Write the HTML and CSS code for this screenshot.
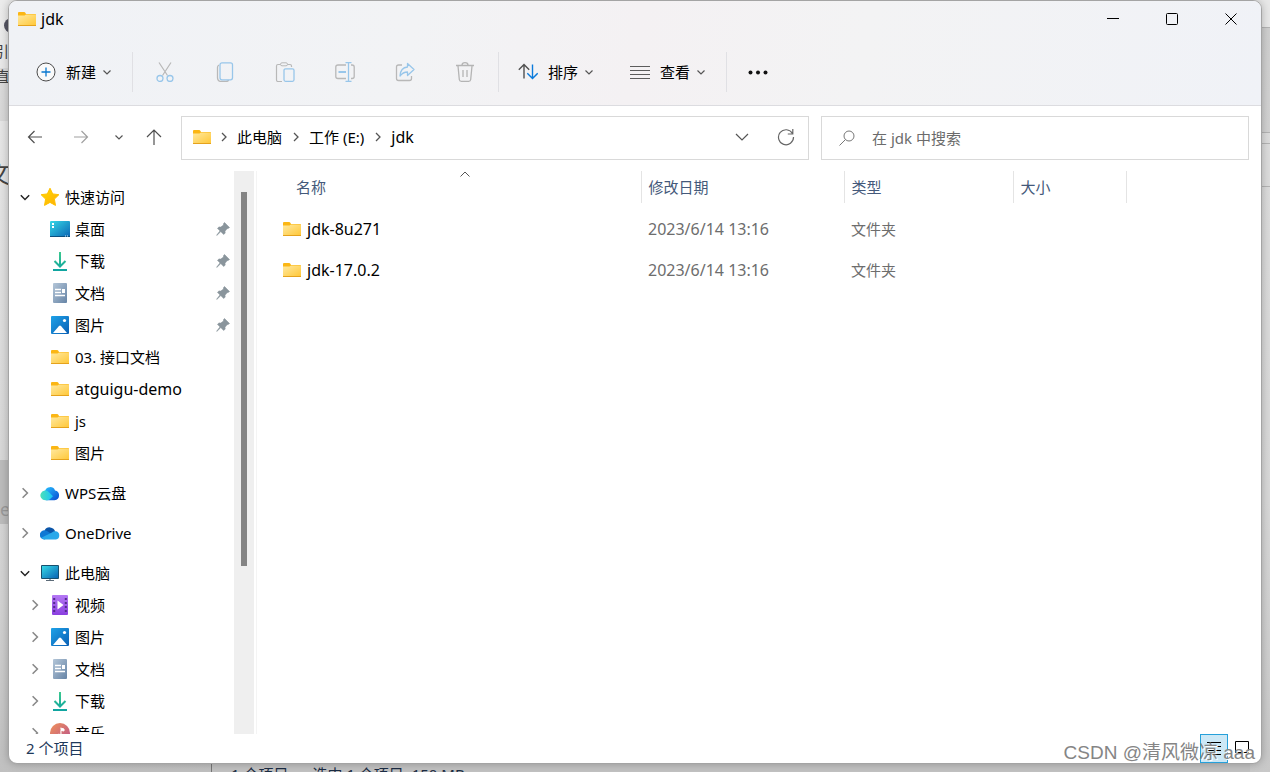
FILE: index.html
```html
<!DOCTYPE html>
<html lang="zh-CN">
<head>
<meta charset="utf-8">
<title>jdk</title>
<link rel="stylesheet" href="styles.css">
</head>
<body>
<svg class="sprite" aria-hidden="true">
  <defs>
    <linearGradient id="g-folder" x1="0" y1="0" x2="1" y2="1"><stop offset="0" stop-color="#ffe9a0"/><stop offset="1" stop-color="#ffc83a"/></linearGradient>
    <linearGradient id="g-desk" x1="0" y1="0" x2="1" y2="1"><stop offset="0" stop-color="#35d8e6"/><stop offset="1" stop-color="#0a64b4"/></linearGradient>
    <linearGradient id="g-down" x1="0" y1="0" x2="0" y2="1"><stop offset="0" stop-color="#3cc98e"/><stop offset="1" stop-color="#10a5a0"/></linearGradient>
    <linearGradient id="g-doc" x1="0" y1="0" x2="1" y2="1"><stop offset="0" stop-color="#b4c6d8"/><stop offset="1" stop-color="#6684a6"/></linearGradient>
    <linearGradient id="g-pic" x1="0" y1="0" x2="1" y2="1"><stop offset="0" stop-color="#1ea2e8"/><stop offset="1" stop-color="#0a5fb4"/></linearGradient>
    <linearGradient id="g-star" x1="0" y1="0" x2="1" y2="1"><stop offset="0" stop-color="#ffdc00"/><stop offset="1" stop-color="#ffac08"/></linearGradient>
    <linearGradient id="g-video" x1="0" y1="0" x2="0" y2="1"><stop offset="0" stop-color="#b478f4"/><stop offset="1" stop-color="#8a3fe0"/></linearGradient>
    <linearGradient id="g-music" x1="0" y1="0" x2="1" y2="1"><stop offset="0" stop-color="#f0925a"/><stop offset="1" stop-color="#b8508e"/></linearGradient>
    <linearGradient id="g-wps" x1="0" y1="0" x2="1" y2="1"><stop offset="0" stop-color="#28c0ff"/><stop offset="1" stop-color="#0848d0"/></linearGradient>
    <linearGradient id="g-wps2" x1="0" y1="0" x2="1" y2="0"><stop offset="0" stop-color="#4be0b8"/><stop offset="1" stop-color="#18c4fa"/></linearGradient>
  </defs>
  <symbol id="folder" viewBox="0 0 20 20"><path d="M1 4q0-1 1-1h5q1 0 1.500 1l.5 1H18q1 0 1 1v10H1z" fill="#fbb614"/><path d="M1 6.500h6.500L9 5.500h9q1 0 1 1V16H1z" fill="url(#g-folder)"/><path d="M1 16.500h18" stroke="#e5a21c"/></symbol>
  <symbol id="desktop" viewBox="0 0 20 20"><rect y="2" width="20" height="16" rx="1" fill="url(#g-desk)"/><path d="M0 17.500h20" stroke="#0b4f7e"/><path d="M2 4h2v2H2zM2 7h2v2H2z" fill="#fff"/><path d="M15 17h1m1 0h1" stroke="#cfe8fa"/></symbol>
  <symbol id="download" viewBox="0 0 20 20"><path d="M10 1v14M4.500 10l5.500 5.500L15.500 10M3 19h14" fill="none" stroke="url(#g-down)" stroke-width="2"/></symbol>
  <symbol id="doc" viewBox="0 0 20 20"><rect x="3" width="14" height="20" rx="1" fill="url(#g-doc)"/><path d="M5 6.500h6M5 9.500h6M5 12.500h10" stroke="#fff" stroke-width="1.400"/><path d="M12 6h3v4h-3z" fill="#fff"/></symbol>
  <symbol id="picture" viewBox="0 0 20 20"><rect x="1" y="1" width="18" height="18" rx="1" fill="url(#g-pic)"/><path d="M3 18l6-7q1-1 2 0l6 7z" fill="#fff"/><circle cx="14.500" cy="5.500" r="1.600" fill="#fff"/></symbol>
  <symbol id="star" viewBox="0 0 20 20"><path d="M10 1.200l2.700 5.700 6.200.8-4.500 4.400 1.100 6.300L10 15.400l-5.500 3 1.100-6.300L1.100 7.700l6.200-.8z" fill="url(#g-star)" stroke="#ffc000" stroke-linejoin="round"/></symbol>
  <symbol id="video" viewBox="0 0 20 20"><rect x="2" width="16" height="20" rx="1" fill="url(#g-video)"/><path d="M4.200 3v15M15.800 3v15" stroke="#532a8e" stroke-width="2" stroke-dasharray="2 2"/><path d="M7.500 5.500l6 4.500-6 4.500z" fill="#fff"/></symbol>
  <symbol id="music" viewBox="0 0 20 20"><circle cx="10" cy="10" r="10" fill="url(#g-music)"/><path d="M10.500 5l3.500 1v2l-3-.6v5.600" fill="#fff" stroke="#fff"/><circle cx="8.800" cy="13" r="2.200" fill="#fff"/></symbol>
  <symbol id="pc" viewBox="0 0 20 20"><rect x="1" y="2" width="18" height="14" rx="1" fill="#17506e"/><rect x="2" y="3" width="16" height="12" fill="url(#g-desk)"/><path d="M9 16h2v1.500H9z" fill="#9aa8b4"/><path d="M6 17.500h8" stroke="#5c6b78"/></symbol>
  <symbol id="wps" viewBox="0 0 20 20"><path d="M5 8a5.300 5.300 0 0 1 10-.6 5 5 0 0 1-.5 9.900H6z" fill="url(#g-wps)"/><path d="M5.400 17.300a4.900 4.900 0 1 1 3.600-8.100l4 4.100-3.500 3.300q-1 .7-2 .7z" fill="url(#g-wps2)"/></symbol>
  <symbol id="onedrive" viewBox="0 0 20 20"><path d="M4.500 7.500a5.800 5.800 0 0 1 10.700 1L10 13z" fill="#0a55a8"/><path d="M4.500 16.500A4.600 4.600 0 1 1 7 8.100l6 4z" fill="#0f78d4"/><path d="M12 9.600a4.300 4.300 0 0 1 4-1.300 4.200 4.200 0 0 1 0 8.200H4.500q-2 0-3.200-1.700z" fill="#28a8ea"/></symbol>
  <symbol id="pin" viewBox="0 0 14 14"><path d="M8.500.5l5 5-1.500 1-1 .2-2 2.600.2 1.700-1.500 1.500L4.800 9.600.8 13.400l-.2-.2L4 8.900 1.500 6.300 3 4.900l1.800.2L7.500 3l.1-1.500z" fill="#8a959c" stroke="#8a959c" stroke-width=".6"/></symbol>
  <symbol id="down" viewBox="0 0 10 10"><path d="M1.500 3.500L5 7l3.500-3.500" fill="none" stroke="currentColor" stroke-width="1.200"/></symbol>
  <symbol id="right" viewBox="0 0 10 10"><path d="M3 1l4 4-4 4" fill="none" stroke="currentColor" stroke-width="1.300"/></symbol>
</svg>

<div class="backdrop" aria-hidden="true">
  <div class="strip left">
    <i class="avatar"></i><span class="cut c1">引</span><span class="cut c2">直</span><span class="cut c3">文</span><span class="cut c4">e</span>
  </div>
  <div class="strip right"></div>
  <div class="strip under"><span>1 个项目</span><span>选中 1 个项目&nbsp; 150 MB</span></div>
</div>

<main class="window">
  <header class="top">
    <div class="titlebar">
      <svg class="i20"><use href="#folder"/></svg>
      <h1>jdk</h1>
      <div class="caption">
        <button aria-label="最小化"><svg width="12" height="12"><path d="M0 5.500h12" stroke="#000"/></svg></button>
        <button aria-label="最大化"><svg width="12" height="12"><rect x=".5" y=".5" width="11" height="11" rx="1" fill="none" stroke="#000"/></svg></button>
        <button aria-label="关闭"><svg width="12" height="12"><path d="M.5.5l11 11M11.500.5l-11 11" stroke="#000"/></svg></button>
      </div>
    </div>
    <div class="toolbar">
      <button class="tool new">
        <svg class="i20" viewBox="0 0 20 20" fill="none"><circle cx="10" cy="10" r="9" stroke="#4a4a4a" fill="#fafafa"/><path d="M10 5.500v9M5.500 10h9" stroke="#0a78d0" stroke-width="1.300"/></svg>
        <span>新建</span><svg class="i10"><use href="#down"/></svg>
      </button>
      <i class="sep"></i>
      <button class="icon" aria-label="剪切"><svg class="i20" viewBox="0 0 20 20" fill="none"><path d="M4 .5l8.500 13M16 .5l-8.500 13" stroke="#b8b8b8" stroke-width="1.200"/><circle cx="5" cy="16.500" r="3" stroke="#98c6ea" stroke-width="1.300"/><circle cx="15" cy="16.500" r="3" stroke="#98c6ea" stroke-width="1.300"/></svg></button>
      <button class="icon" aria-label="复制"><svg class="i20" viewBox="0 0 20 20" fill="none"><path d="M4 3q-1.500.6-1.500 2.500v10q0 4 4 4H11q2 0 2.600-1.500" stroke="#b8b8b8" stroke-width="1.300"/><rect x="5" y=".8" width="12.500" height="17" rx="2" stroke="#98c6ea" stroke-width="1.300"/></svg></button>
      <button class="icon" aria-label="粘贴"><svg class="i20" viewBox="0 0 20 20" fill="none"><path d="M5.500 2.500H3q-1.500 0-1.500 1.500v14q0 1.500 1.500 1.500h4M12.500 2.500H15q1.500 0 1.500 1.500v1" stroke="#b8b8b8" stroke-width="1.200"/><rect x="5.500" y=".8" width="7" height="3" rx="1.500" stroke="#b8b8b8"/><rect x="9" y="6.800" width="10" height="12.500" rx="1.500" stroke="#98c6ea" stroke-width="1.300"/></svg></button>
      <button class="icon" aria-label="重命名"><svg class="i20" viewBox="0 0 20 20" fill="none"><path d="M11 3H3Q.8 3 .8 5v9.500q0 2 2.200 2H11M16 3h1q2.200 0 2.200 2v9.500q0 2-2.200 2h-1" stroke="#b8b8b8" stroke-width="1.300"/><path d="M3.500 10H11" stroke="#98c6ea" stroke-width="2"/><path d="M13.500.7v18.600M10.500.7h6M10.500 19.300h6" stroke="#98c6ea" stroke-width="1.300"/></svg></button>
      <button class="icon" aria-label="共享"><svg class="i20" viewBox="0 0 20 20" fill="none"><path d="M7 3H3.500Q1.500 3 1.500 5v11.500q0 2 2 2h11q2 0 2-2V14" stroke="#b8b8b8" stroke-width="1.300"/><path d="M12.500 1.500l6.500 6-6.500 6V10Q8 10 5 14q.5-8.500 7.500-9z" stroke="#98c6ea" stroke-width="1.300" stroke-linejoin="round"/></svg></button>
      <button class="icon" aria-label="删除"><svg class="i20" viewBox="0 0 20 20" fill="none"><path d="M1 3.500h18M7 3q0-2.300 3-2.300T13 3M3 4l1.300 13.500q.2 1.800 2 1.800h7.400q1.800 0 2-1.800L17 4" stroke="#b4b4b4" stroke-width="1.300"/><path d="M8 8v7M12 8v7" stroke="#b4b4b4" stroke-width="1.300"/></svg></button>
      <i class="sep"></i>
      <button class="tool sort">
        <svg class="i20" viewBox="0 0 20 20" fill="none" stroke-width="1.400"><path d="M6 16.500V2.500M.8 7.700L6 2.500l5.200 5.200" stroke="#505050"/><path d="M14.500 2.500v14M9.300 11.300l5.200 5.200 5.200-5.200" stroke="#0a7adb"/></svg>
        <span>排序</span><svg class="i10"><use href="#down"/></svg>
      </button>
      <button class="tool view">
        <svg class="i20" viewBox="0 0 20 20" stroke="#5c5c5c"><path d="M0 4.500h20M0 8.500h20M0 12.500h20M0 16.500h20"/></svg>
        <span>查看</span><svg class="i10"><use href="#down"/></svg>
      </button>
      <i class="sep"></i>
      <button class="icon more" aria-label="查看更多"><svg class="i20" viewBox="0 0 20 20" fill="#111"><circle cx="2.500" cy="10.500" r="2"/><circle cx="10" cy="10.500" r="2"/><circle cx="17.500" cy="10.500" r="2"/></svg></button>
    </div>
  </header>

  <div class="navrow">
    <nav class="moves">
      <button aria-label="返回"><svg width="16" height="16" fill="none" stroke="#505050"><path d="M15 8H1.500M7.500 2l-6 6 6 6" stroke-width="1.200"/></svg></button>
      <button aria-label="前进"><svg width="16" height="16" fill="none" stroke="#a0a0a0"><path d="M1 8h13.500M8.500 2l6 6-6 6" stroke-width="1.200"/></svg></button>
      <button class="recent" aria-label="最近浏览的位置"><svg class="i10"><use href="#down"/></svg></button>
      <button class="up" aria-label="向上"><svg width="16" height="16" fill="none" stroke="#505050"><path d="M8 16V1M1 8l7-7 7 7" stroke-width="1.200"/></svg></button>
    </nav>
    <div class="address">
      <svg class="i20"><use href="#folder"/></svg>
      <svg class="i10"><use href="#right"/></svg><a href="#">此电脑</a>
      <svg class="i10"><use href="#right"/></svg><a href="#">工作 (E:)</a>
      <svg class="i10"><use href="#right"/></svg><a href="#" class="latin">jdk</a>
      <button class="history" aria-label="以前的位置"><svg width="14" height="14" fill="none" stroke="#555"><path d="M1 4l6 6 6-6" stroke-width="1.200"/></svg></button>
      <button class="refresh" aria-label="刷新"><svg width="18" height="18" fill="none" stroke="#666"><path d="M15.500 5.500A7.500 7.500 0 1 0 16.500 9M15.800 1v5h-5" stroke-width="1.200"/></svg></button>
    </div>
    <label class="search">
      <svg width="16" height="16" fill="none" stroke="#777"><circle cx="10" cy="6" r="5"/><path d="M6.500 9.500L.5 15.500"/></svg>
      <input type="text" aria-label="搜索" placeholder="在 jdk 中搜索">
    </label>
  </div>

  <div class="body">
    <nav class="tree">
      <ul>
        <li class="root"><svg class="i10 open"><use href="#down"/></svg><svg class="i20"><use href="#star"/></svg><span>快速访问</span></li>
        <li><svg class="i20"><use href="#desktop"/></svg><span>桌面</span><svg class="pin"><use href="#pin"/></svg></li>
        <li><svg class="i20"><use href="#download"/></svg><span>下载</span><svg class="pin"><use href="#pin"/></svg></li>
        <li><svg class="i20"><use href="#doc"/></svg><span>文档</span><svg class="pin"><use href="#pin"/></svg></li>
        <li><svg class="i20"><use href="#picture"/></svg><span>图片</span><svg class="pin"><use href="#pin"/></svg></li>
        <li><svg class="i20"><use href="#folder"/></svg><span>03. 接口文档</span></li>
        <li><svg class="i20"><use href="#folder"/></svg><span class="latin">atguigu-demo</span></li>
        <li><svg class="i20"><use href="#folder"/></svg><span>js</span></li>
        <li><svg class="i20"><use href="#folder"/></svg><span>图片</span></li>
      </ul>
      <ul><li class="root"><svg class="i10 shut"><use href="#right"/></svg><svg class="i20"><use href="#wps"/></svg><span>WPS云盘</span></li></ul>
      <ul><li class="root"><svg class="i10 shut"><use href="#right"/></svg><svg class="i20"><use href="#onedrive"/></svg><span>OneDrive</span></li></ul>
      <ul>
        <li class="root"><svg class="i10 open"><use href="#down"/></svg><svg class="i20"><use href="#pc"/></svg><span>此电脑</span></li>
        <li class="sub"><svg class="i10 shut"><use href="#right"/></svg><svg class="i20"><use href="#video"/></svg><span>视频</span></li>
        <li class="sub"><svg class="i10 shut"><use href="#right"/></svg><svg class="i20"><use href="#picture"/></svg><span>图片</span></li>
        <li class="sub"><svg class="i10 shut"><use href="#right"/></svg><svg class="i20"><use href="#doc"/></svg><span>文档</span></li>
        <li class="sub"><svg class="i10 shut"><use href="#right"/></svg><svg class="i20"><use href="#download"/></svg><span>下载</span></li>
        <li class="sub"><svg class="i10 shut"><use href="#right"/></svg><svg class="i20"><use href="#music"/></svg><span>音乐</span></li>
      </ul>
    </nav>
    <div class="scroll"><div class="thumb"></div></div>
    <section class="files">
      <table>
        <colgroup><col class="w-name"><col class="w-date"><col class="w-type"><col class="w-size"><col></colgroup>
        <thead><tr>
          <th class="name"><svg class="asc" width="10" height="6" fill="none" stroke="#555"><path d="M.5 5.500L5 1l4.500 4.500"/></svg>名称</th>
          <th>修改日期</th><th>类型</th><th>大小</th><td></td>
        </tr></thead>
        <tbody>
          <tr><td class="name"><div><svg class="i20"><use href="#folder"/></svg>jdk-8u271</div></td><td class="latin">2023/6/14 13:16</td><td>文件夹</td><td></td><td></td></tr>
          <tr><td class="name"><div><svg class="i20"><use href="#folder"/></svg>jdk-17.0.2</div></td><td class="latin">2023/6/14 13:16</td><td>文件夹</td><td></td><td></td></tr>
        </tbody>
      </table>
    </section>
  </div>

  <footer class="status">
    <span class="count">2 个项目</span>
    <button class="mode on" aria-label="详细信息"><svg width="16" height="16" stroke="#000"><path d="M1 1.500h14M1 5.500h14M1 9.500h14M1 13.500h14"/></svg></button>
    <button class="mode" aria-label="大缩略图"><svg width="16" height="16" fill="none" stroke="#000"><path d="M1.500.5h13v11h-13z"/></svg></button>
  </footer>
</main>
<div class="watermark">CSDN @清风微凉 aaa</div>
</body>
</html>
```

FILE: styles.css
```css
* { box-sizing: border-box; }

body {
  margin: 0;
  height: 100vh;
  padding: 0 8px 8px;
  display: flex;
  overflow: hidden;
  position: relative;
  background: #bdbdbd;
  color: #000;
  font: 15px/20px "Noto Sans", "Noto Sans CJK SC", sans-serif;
}

.latin, h1, .files .name div { font-size: 16px; }

button {
  border: 0;
  padding: 0;
  background: none;
  font: inherit;
  color: inherit;
  display: flex;
  align-items: center;
  justify-content: center;
}

a { color: inherit; text-decoration: none; }
ul { list-style: none; margin: 0; padding: 0; }
svg { flex: none; display: block; }
.sprite { position: absolute; width: 0; height: 0; }
.i20 { width: 20px; height: 20px; }
.i10 { width: 10px; height: 10px; color: #555; }

/* Windows that lie behind the explorer */
.backdrop { position: absolute; inset: 0; overflow: hidden; }
.strip { position: absolute; overflow: hidden; }
.left {
  left: 0; top: 0; bottom: 0; width: 211px;
  background:
    linear-gradient(#bcbcbc, #bcbcbc) 0 460px / 100% 64px no-repeat,
    linear-gradient(#dcdcdc, #d8d8d8) 0 68px / 100% 53px no-repeat,
    linear-gradient(#ececec, #dedede 300px, #d2d2d2 600px, #c0c0c0);
}
.right {
  right: 0; top: 0; bottom: 0; width: 20px;
  background:
    linear-gradient(#b4b4b4, #b4b4b4) 0 27px / 100% 1px no-repeat,
    linear-gradient(#b4b4b4, #b4b4b4) 0 132px / 100% 1px no-repeat,
    linear-gradient(#b4b4b4, #b4b4b4) 0 143px / 100% 1px no-repeat,
    linear-gradient(#b4b4b4, #b4b4b4) 0 186px / 100% 1px no-repeat,
    linear-gradient(#e8e8e8, #e8e8e8) 0 0 / 100% 27px no-repeat,
    linear-gradient(#cfcfcf, #d2d2d2) 0 28px / 100% 104px no-repeat,
    linear-gradient(#dedede, #d8d8d8 500px, #c8c8c8);
}
.under {
  left: 211px; right: 20px; bottom: 0; height: 8px;
  border-left: 1px solid #777;
  background: #c2c2c2;
  color: #1b2c44;
  display: flex;
  gap: 24px;
  padding-left: 19px;
}
.avatar { position: absolute; left: 4px; top: 18px; width: 15px; height: 15px; border-radius: 50%; background: #555563; }
.cut { position: absolute; color: #444; }
.c1 { left: -6px; top: 41px; }
.c2 { left: -5px; top: 66px; }
.c3 { left: -14px; top: 158px; font-size: 25px; line-height: 30px; }
.c4 { left: 0; top: 499px; font-size: 18px; color: #999; }

.window {
  flex: 1;
  position: relative;
  display: flex;
  flex-direction: column;
  overflow: hidden;
  background: #fff;
  border: 1px solid #a4a4a4;
  border-radius: 9px;
  box-shadow: 0 0 9px rgba(0, 0, 0, 0.25);
}

.top {
  border-bottom: 1px solid #dcdce0;
  background: linear-gradient(100deg, #f0f2f6, #f2f3f5 32%, #f4f1f3 50%, #f3f3f4 68%, #f0f2f7);
}
.titlebar { display: flex; align-items: center; height: 36px; padding-left: 8px; }
.titlebar h1 { flex: 1; margin: 0 0 0 4px; font-weight: 400; line-height: 20px; }
.caption { display: flex; }
.caption button { width: 59px; height: 36px; padding-right: 1px; }

.toolbar { display: flex; align-items: center; height: 68px; padding: 2px 0 0 18px; }
.tool { gap: 6px; height: 40px; padding: 0 8px; }
.tool span { margin-left: 4px; }
.new { width: 105px; padding-left: 9px; justify-content: flex-start; }
.sort { width: 112px; padding-left: 19px; justify-content: flex-start; }
.view { width: 115px; padding-left: 19px; justify-content: flex-start; }
.sep { width: 1px; height: 40px; background: #e0e0e4; }
.icon { width: 60px; height: 40px; }
.sep + .icon { margin-left: 2px; }
.sep + .more { margin-left: 1px; }
.icon + .sep { margin-left: 3px; }

.navrow { display: flex; padding: 10px 12px; height: 65px; }
.moves { display: flex; align-items: center; width: 160px; }
.moves button { width: 28px; height: 42px; margin-right: 18px; }
.moves { height: 42px; }
.moves .recent { width: 20px; margin: 0 11px 0 -4px; }
.moves .up { margin: 0; }
.address { flex: 1; display: flex; align-items: center; height: 44px; padding: 0 10px 2px; border: 1px solid #d9d9d9; }
.address .i10 { margin: 0 8px 0 9px; }
.address .i20 + .i10 { margin-left: 7px; }
.address button { width: 44px; height: 42px; }
.address .history { margin-left: auto; }
.address .refresh { margin-right: -10px; }
.search { width: 428px; display: flex; align-items: center; height: 44px; margin-left: 12px; padding: 0 17px; border: 1px solid #d9d9d9; }
.search input { flex: 1; min-width: 0; margin-left: 17px; padding: 0; border: 0; outline: 0; font: inherit; background: none; }
.search input::placeholder { color: #6b6b6b; opacity: 1; }

.body { flex: 1; min-height: 0; display: flex; }
.tree { width: 225px; overflow: hidden; padding: 10px 4px 0 10px; }
.tree ul + ul { margin-top: 8px; }
.tree li { display: flex; align-items: center; height: 32px; padding-left: 31px; white-space: nowrap; }
.tree .root { padding-left: 0; }
.tree .sub { padding-left: 10px; }
.tree span { margin-left: 5px; }
.tree .i10 { width: 12px; height: 12px; color: #888; }
.tree .i10 + .i20 { margin-left: 9px; }
.tree .open { color: #222; }
.pin { width: 14px; height: 14px; margin-left: auto; }

.scroll { width: 20px; background: #efefef; padding: 21px 7px 0; }
.thumb { width: 6px; height: 69%; background: #848484; }

.files { flex: 1; margin-left: 2px; border-left: 1px solid #f4f4f4; }
table { width: 100%; border-collapse: collapse; table-layout: fixed; }
.w-name { width: 384px; }
.w-date { width: 203px; }
.w-type { width: 169px; }
.w-size { width: 113px; }
th { position: relative; height: 32px; padding: 0 7px; border-right: 1px solid #e4e4e4; color: #44597a; font-weight: 400; text-align: left; }
th.name { padding-left: 39px; }
.asc { position: absolute; left: 203px; top: 0; }
tbody td { height: 41px; padding: 0 7px; color: #6d6d6d; }
tbody tr:first-child td { height: 46px; padding-top: 5px; }
tbody td.name { padding-left: 25px; color: #000; }
td.name div { display: flex; align-items: center; gap: 5px; }

.status { display: flex; align-items: center; height: 29px; padding: 0 9px 0 17px; color: #1e395b; }
.count { flex: 1; padding-bottom: 2px; }
.mode { width: 24px; height: 29px; }
.on { width: 28px; background: #cce8f6; border: 1px solid #26a0da; }
.on + .mode { padding-left: 3px; }

/* Mark stamped over the corner of the window */
.watermark {
  position: absolute;
  right: 15px;
  bottom: 7px;
  color: #858585;
  text-shadow: 1px 1px 0 #fff;
  font: 19px/24px "Liberation Sans", "Noto Sans CJK SC", sans-serif;
}
```
